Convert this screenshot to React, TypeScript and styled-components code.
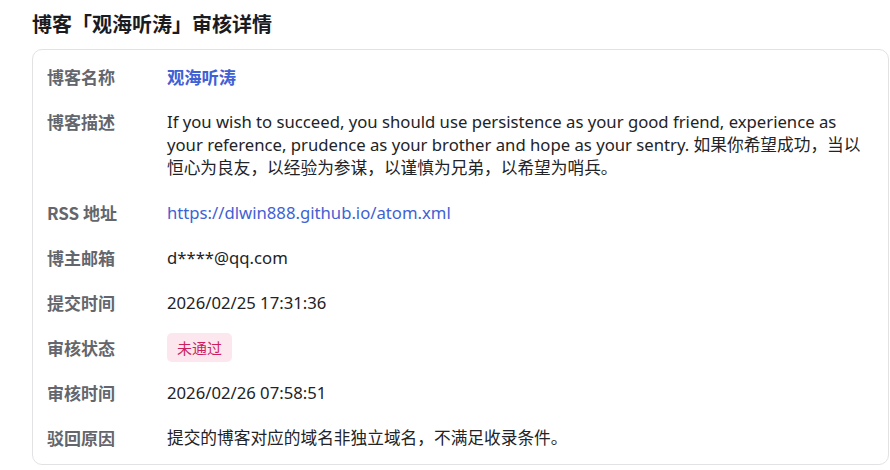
import React from "react";
import styled, { createGlobalStyle } from "styled-components";

const Global = createGlobalStyle`
  html, body { margin: 0; padding: 0; background: #ffffff; }
  body {
    font-family: "Noto Sans", "Noto Sans CJK SC", sans-serif;
    -webkit-font-smoothing: antialiased;
  }
`;

const Page = styled.div`
  display: flex;
  flex-direction: column;
  padding: 10px 1px 0 32px;
  width: 890px;
  box-sizing: border-box;
`;

const Title = styled.h2`
  margin: 0 0 11px 0;
  font-size: 20px;
  line-height: 28px;
  font-weight: 700;
  color: #1b1b1f;
  font-family: "Noto Sans CJK SC", sans-serif;
`;

const Card = styled.div`
  border: 1px solid #e2e2e5;
  border-radius: 10px;
  padding: 4px 15px 4px 14px;
  display: flex;
  flex-direction: column;
`;

const Row = styled.div`
  display: grid;
  grid-template-columns: 120px 1fr;
  padding: 11px 0;
  font-size: 16.7px;
  line-height: 23px;
`;

const Label = styled.div`
  font-weight: 700;
  font-size: 17px;
  color: #63666c;
  font-family: "Noto Sans CJK SC", sans-serif;
`;

const Value = styled.div<{ $tone?: "link" | "name" }>`
  color: ${(p) => (p.$tone ? "#3f61d4" : "#222326")};
  font-weight: ${(p) => (p.$tone === "name" ? 700 : 400)};
  font-size: ${(p) => (p.$tone === "name" ? "17.3px" : "16.7px")};
  font-family: ${(p) =>
    p.$tone === "name"
      ? `"Noto Sans CJK SC", sans-serif`
      : `"Noto Sans", "Noto Sans CJK SC", sans-serif`};
`;

const Link = styled.a`
  color: inherit;
  text-decoration: none;
`;

const Badge = styled.span`
  display: inline-flex;
  align-items: center;
  height: 29px;
  margin: -3px 0;
  padding: 0 10px;
  border-radius: 5px;
  background: #fde7ef;
  color: #cc1f5e;
  font-size: 15px;
  font-family: "Noto Sans CJK SC", sans-serif;
`;

type Item = { label: string; value: React.ReactNode; tone?: "link" | "name" };

const items: Item[] = [
  { label: "博客名称", value: "观海听涛", tone: "name" },
  {
    label: "博客描述",
    value:
      "If you wish to succeed, you should use persistence as your good friend, experience as your reference, prudence as your brother and hope as your sentry. 如果你希望成功，当以恒心为良友，以经验为参谋，以谨慎为兄弟，以希望为哨兵。",
  },
  {
    label: "RSS 地址",
    value: <Link href="#">https://dlwin888.github.io/atom.xml</Link>,
    tone: "link",
  },
  { label: "博主邮箱", value: "d****@qq.com" },
  { label: "提交时间", value: "2026/02/25 17:31:36" },
  { label: "审核状态", value: <Badge>未通过</Badge> },
  { label: "审核时间", value: "2026/02/26 07:58:51" },
  { label: "驳回原因", value: "提交的博客对应的域名非独立域名，不满足收录条件。" },
];

export default function App() {
  return (
    <>
      <Global />
      <Page>
        <Title>博客「观海听涛」审核详情</Title>
        <Card>
          {items.map((it) => (
            <Row key={it.label}>
              <Label>{it.label}</Label>
              <Value $tone={it.tone}>{it.value}</Value>
            </Row>
          ))}
        </Card>
      </Page>
    </>
  );
}
